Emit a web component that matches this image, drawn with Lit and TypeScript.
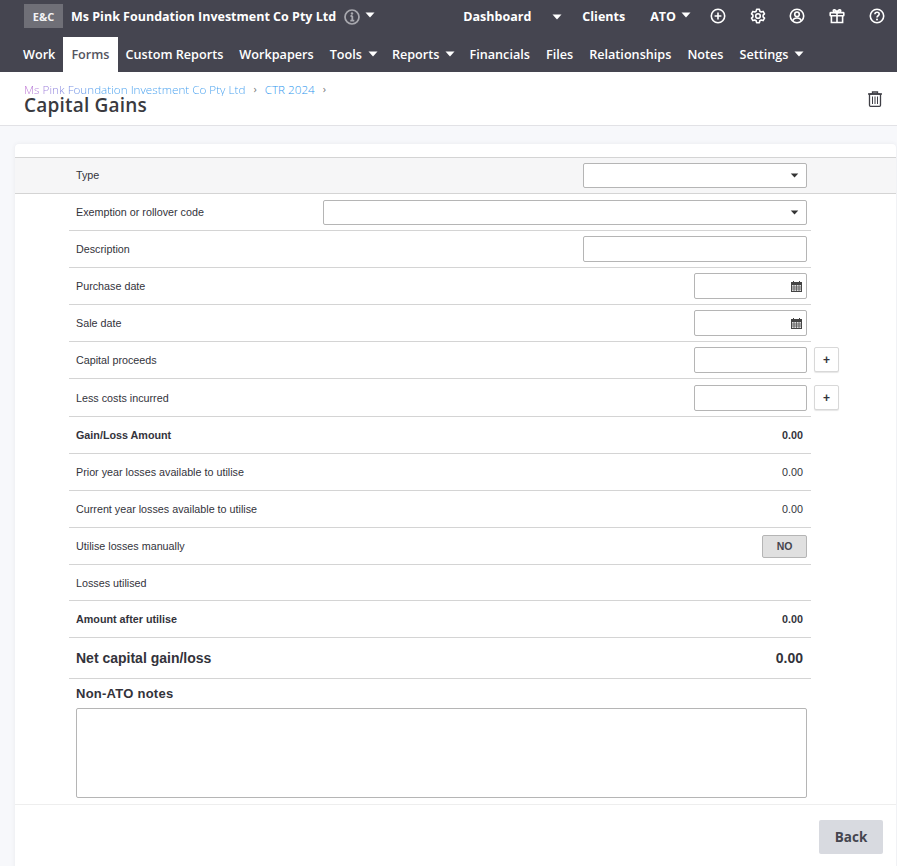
import { LitElement, html, css, svg } from "lit";
import { customElement } from "lit/decorators.js";

const caret = html`<svg class="caret" viewBox="0 0 10 6" width="10" height="6"><path d="M0.5 0.5h9L5 5.5z" fill="currentColor"/></svg>`;

const icon = (body: unknown) => html`<svg class="ico" viewBox="0 0 16 16" width="16" height="16" fill="none" stroke="#fff" stroke-width="1.6">${body}</svg>`;

const calendar = html`<svg class="cal" viewBox="0 0 11 11" width="11" height="11"><rect x="0.5" y="1.5" width="10" height="9" fill="#ddd" stroke="#444"/><rect x="0.5" y="1.5" width="10" height="2.5" fill="#444"/><path d="M2.5 0v2M8.5 0v2" stroke="#444"/><path d="M0.500 6h10M0.500 8h10M3 4v6M5.500 4v6M8 4v6" stroke="#555" stroke-width=".8"/></svg>`;

const nav: [string, boolean?][] = [
  ["Work"], ["Forms"], ["Custom Reports"], ["Workpapers"], ["Tools", true], ["Reports", true],
  ["Financials"], ["Files"], ["Relationships"], ["Notes"], ["Settings", true],
];

@customElement("app-root")
export class AppRoot extends LitElement {
  static styles = css`
    :host { display: block; width: 897px; height: 866px; overflow: hidden; background: #f7f8fb; font-family: "Liberation Sans", Arial, sans-serif; color: #33333b; }
    .top { background: #454550; height: 72px; font-family: "Open Sans", sans-serif; color: #fff; display: flex; flex-direction: column; }
    .r1 { height: 37px; box-sizing: border-box; padding: 0 0 5px 24px; display: flex; align-items: center; font-weight: 700; font-size: 12.5px; }
    .logo { width: 39px; height: 24px; background: #6f6f77; display: flex; align-items: center; justify-content: center; font-size: 11px; font-weight: 700; color: #f2f2f4; margin-right: 8px; }
    .co { white-space: nowrap; }
    .info { margin-left: 8px; margin-top: 1px; }
    .r1 .caret { margin-left: 5px; margin-top: -2px; }
    .rnav { margin-left: auto; display: flex; align-items: center; height: 100%; padding-right: 12px; }
    .rnav span { white-space: nowrap; }
    .dash { margin-right: 16px; }
    .clients { margin-left: 20px; margin-right: 25px; }
    .r1 .caret.dc { margin-top: 1px; }
    .ico { display: block; }
    .i1 { margin-left: 19px; } .i2 { margin-left: 24px; } .i3 { margin-left: 23px; }
    .r2 { height: 35px; display: flex; align-items: stretch; padding-left: 15px; font-size: 12.65px; font-weight: 600; }
    .tab { display: flex; align-items: center; padding: 0 8px 1px; white-space: nowrap; gap: 6px; }
    .tab.dd { padding-right: 6px; }
    .tab.on { background: #fff; color: #55555f; }
    .head { height: 53px; background: #fff; border-bottom: 1px solid #e2e2e6; position: relative; padding-left: 24px; font-family: "Open Sans", sans-serif; }
    .crumb { font-size: 11.7px; font-weight: 300; line-height: 14px; padding-top: 10px; color: #2f97ee; display: flex; align-items: center; white-space: nowrap; }
    .crumb i { font-style: normal; font-weight: 400; color: #777; margin: 0 8px; font-size: 11px; }
    .crumb b { font-weight: 300; background: linear-gradient(90deg, #c06fd2, #3f9cee 35%); -webkit-background-clip: text; background-clip: text; color: transparent; }
    h1 { margin: 0; font-size: 19px; line-height: 18px; font-weight: 600; color: #3a3a40; letter-spacing: .2px; }
    .trash { position: absolute; right: 15px; top: 19px; }
    .card { margin: 18px 1px 0 15px; background: #fff; border-radius: 4px 4px 0 0; box-shadow: 0 0 4px rgba(60,60,80,.08); padding-top: 13px; height: 722px; display: flex; flex-direction: column; }
    .band { background: #f6f6f7; border-top: 1px solid #d4d4d4; border-bottom: 1px solid #d4d4d4; height: 35px; padding-left: 54px; display: flex; }
    .band .row { border: 0; height: 35px; }
    .band .lbl { margin-top: -1px; }
    .body { padding-left: 54px; }
    .row { width: 742px; box-sizing: border-box; height: 37px; border-bottom: 1px solid #d4d4d4; display: flex; align-items: center; padding: 0 4px 0 7px; font-size: 10.75px; position: relative; }
    .row .lbl { flex: 1; white-space: nowrap; }
    .tall { height: 38px; }
    .short { height: 36px; }
    .bold { font-weight: 700; }
    .net { height: 41px; font-size: 14px; font-weight: 700; }
    .val { padding-right: 4px; }
    .field { border: 1px solid #b5b5b5; border-radius: 2px; background: #fff; box-sizing: border-box; height: 26px; display: flex; align-items: center; justify-content: flex-end; padding-right: 4px; }
    .sel { height: 25px; padding-right: 7px; }
    .w224 { width: 224px; } .w484 { width: 484px; } .w113 { width: 113px; }
    .sel .caret { color: #333; width: 9px; height: 5px; }
    .plus { position: absolute; left: 745px; top: 5px; width: 25px; height: 25px; box-sizing: border-box; border: 1px solid #d8d8d8; border-radius: 2px; background: #fff; box-shadow: 0 1px 1px rgba(0,0,0,.1); display: flex; align-items: center; justify-content: center; font-weight: 700; font-size: 12px; color: #33333b; }
    .tall .plus { top: 6px; }
    .no { width: 45px; height: 23px; box-sizing: border-box; background: #e0e0e0; border: 1px solid #b5b5b5; border-radius: 2px; display: flex; align-items: center; justify-content: center; font-weight: 700; font-size: 10.5px; color: #45454f; }
    .notes { width: 742px; box-sizing: border-box; height: 126px; border-bottom: 1px solid #d4d4d4; padding: 7px 4px 0 7px; }
    .notes .t { font-size: 13px; font-weight: 700; line-height: 16px; margin-bottom: 6px; letter-spacing: .25px; }
    .area { height: 90px; box-sizing: border-box; border: 1px solid #b5b5b5; border-radius: 2px; }
    .foot { border-top: 1px solid #eee; margin-top: -1px; flex: 1; display: flex; justify-content: flex-end; padding: 15px 13px 0 0; }
    .back { width: 64px; height: 34px; background: #d8dae0; border-radius: 2px; display: flex; align-items: center; justify-content: center; font-family: "Open Sans", sans-serif; font-weight: 700; font-size: 13.5px; color: #45454f; }
  `;

  private rowTpl(label: string, right: unknown, cls = "") {
    return html`<div class="row ${cls}"><span class="lbl">${label}</span>${right}</div>`;
  }

  render() {
    const selCaret = html`<svg class="caret" viewBox="0 0 10 6"><path d="M0.5 0.5h9L5 5.5z" fill="currentColor"/></svg>`;
    return html`
      <div class="top">
        <div class="r1">
          <div class="logo">E&amp;C</div>
          <span class="co">Ms Pink Foundation Investment Co Pty Ltd</span>
          <svg class="info" viewBox="0 0 16 16" width="16" height="16" fill="none" stroke="#a8a8ae" stroke-width="1.700"><circle cx="8" cy="8" r="7"/><path d="M8.300 7v4.500M6.300 11.700h4M6.500 7h2" stroke-width="1.800"/><circle cx="8" cy="4.500" r="1.200" fill="#a8a8ae" stroke="none"/></svg>
          ${caret}
          <div class="rnav">
            <span class="dash">Dashboard</span>
            <svg class="caret dc" viewBox="0 0 10 6" width="10" height="6"><path d="M0.5 0.5h9L5 5.5z" fill="currentColor"/></svg>
            <span class="clients">Clients</span>
            <span>ATO</span>
            ${caret}
            <div class="ico i1">${icon(svg`<circle cx="8" cy="8" r="6.700"/><path d="M8 4.600v6.800M4.600 8h6.800"/>`)}</div>
            <div class="ico i2">${icon(svg`<path d="M6.600 1.300h2.800l.4 1.900 1.400.8 1.900-.6 1.400 2.400-1.400 1.300v1.800l1.400 1.300-1.400 2.400-1.900-.6-1.400.8-.4 1.900H6.600l-.4-1.900-1.400-.8-1.900.6-1.400-2.400 1.400-1.300V7.100L1.500 5.800l1.400-2.400 1.900.6 1.400-.8z" stroke-linejoin="round"/><circle cx="8" cy="8" r="2.300"/>`)}</div>
            <div class="ico i3">${icon(svg`<circle cx="8" cy="8" r="6.700"/><circle cx="8" cy="6.300" r="2.300"/><path d="M3.700 12.800c.6-2 2.300-2.800 4.300-2.800s3.700.8 4.300 2.800"/>`)}</div>
            <div class="ico i2">${icon(svg`<rect x="1.200" y="4.600" width="13.600" height="3.200" rx=".6"/><path d="M2.400 7.800v6.700h11.200V7.800M8 4.600v9.900M8 4.600C6 4.600 4.300 3.900 4.300 2.700 4.300 1.600 6.800 1 8 4.600c1.200-3.600 3.700-3 3.700-1.900 0 1.200-1.700 1.900-3.700 1.900z"/>`)}</div>
            <div class="ico i2">${icon(svg`<circle cx="8" cy="8" r="6.700"/><path d="M5.900 6.200c0-1.300 1-2 2.200-2s2.100.8 2.100 1.900c0 1.700-2.200 1.600-2.200 3.400"/><circle cx="8" cy="11.600" r="1" fill="#fff" stroke="none"/>`)}</div>
          </div>
        </div>
        <div class="r2">
          ${nav.map(([n, c]) => html`<div class="tab ${n === "Forms" ? "on" : ""} ${c ? "dd" : ""}">${n}${c ? caret : ""}</div>`)}
        </div>
      </div>
      <div class="head">
        <div class="crumb"><b>Ms Pink Foundation Investment Co Pty Ltd</b><i>›</i>CTR 2024<i>›</i></div>
        <h1>Capital Gains</h1>
        <svg class="trash" viewBox="0 0 14 16" width="14" height="16" fill="none" stroke="#3f3f46" stroke-width="1.300"><path d="M0 3h14M4.500 3V1h5v2"/><rect x="1.500" y="3" width="11" height="12.300" rx="1"/><path d="M4.500 5.500v7.500M7 5.500v7.500M9.500 5.500v7.500" stroke-width="1"/></svg>
      </div>
      <div class="card">
        <div class="band">
          ${this.rowTpl("Type", html`<div class="field sel w224">${selCaret}</div>`)}
        </div>
        <div class="body">
          ${this.rowTpl("Exemption or rollover code", html`<div class="field sel w484">${selCaret}</div>`)}
          ${this.rowTpl("Description", html`<div class="field w224"></div>`)}
          ${this.rowTpl("Purchase date", html`<div class="field w113">${calendar}</div>`)}
          ${this.rowTpl("Sale date", html`<div class="field w113">${calendar}</div>`)}
          ${this.rowTpl("Capital proceeds", html`<div class="field w113"></div><div class="plus">+</div>`)}
          ${this.rowTpl("Less costs incurred", html`<div class="field w113"></div><div class="plus">+</div>`, "tall")}
          ${this.rowTpl("Gain/Loss Amount", html`<span class="val">0.00</span>`, "bold")}
          ${this.rowTpl("Prior year losses available to utilise", html`<span class="val">0.00</span>`)}
          ${this.rowTpl("Current year losses available to utilise", html`<span class="val">0.00</span>`)}
          ${this.rowTpl("Utilise losses manually", html`<div class="no">NO</div>`)}
          ${this.rowTpl("Losses utilised", "", "short")}
          ${this.rowTpl("Amount after utilise", html`<span class="val">0.00</span>`, "bold")}
          ${this.rowTpl("Net capital gain/loss", html`<span class="val">0.00</span>`, "net")}
          <div class="notes">
            <div class="t">Non-ATO notes</div>
            <div class="area"></div>
          </div>
        </div>
        <div class="foot"><div class="back">Back</div></div>
      </div>
    `;
  }
}
